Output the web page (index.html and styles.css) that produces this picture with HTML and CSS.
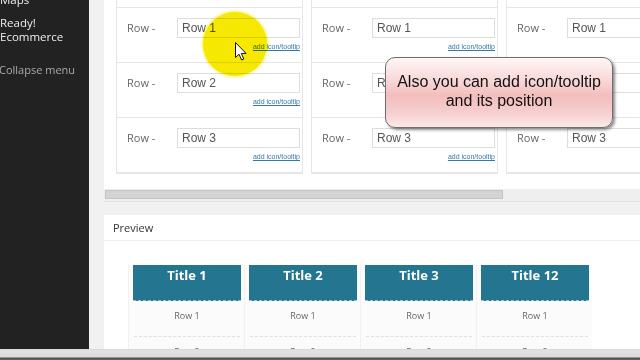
FILE: index.html
```html
<!DOCTYPE html>
<html lang="en">
<head>
  <meta charset="UTF-8" />
  <title>Pricing table editor</title>
  <link rel="stylesheet" href="styles.css">
</head>
<body>
  <div class="screen">
    <div class="main">
      <!-- admin menu -->
      <div class="sidebar">
        <ul class="menu">
          <li>Maps</li>
          <li class="ready">Ready!<br/>Ecommerce</li>
          <li class="collapse">Collapse menu</li>
        </ul>
      </div>

      <div class="content">
        <div class="panel rows-panel">
          <div class="columns">
            <div class="col">
              <div class="stub"></div>
              <div class="row"><span class="label">Row -</span><div class="field"><div class="input">Row 1</div><a class="tip-link">add icon/tooltip</a></div></div>
              <div class="row"><span class="label">Row -</span><div class="field"><div class="input">Row 2</div><a class="tip-link">add icon/tooltip</a></div></div>
              <div class="row"><span class="label">Row -</span><div class="field"><div class="input">Row 3</div><a class="tip-link">add icon/tooltip</a></div></div>
            </div>
            <div class="col">
              <div class="stub"></div>
              <div class="row"><span class="label">Row -</span><div class="field"><div class="input">Row 1</div><a class="tip-link">add icon/tooltip</a></div></div>
              <div class="row"><span class="label">Row -</span><div class="field"><div class="input">Row 2</div><a class="tip-link">add icon/tooltip</a></div></div>
              <div class="row"><span class="label">Row -</span><div class="field"><div class="input">Row 3</div><a class="tip-link">add icon/tooltip</a></div></div>
            </div>
            <div class="col">
              <div class="stub"></div>
              <div class="row"><span class="label">Row -</span><div class="field"><div class="input">Row 1</div><a class="tip-link">add icon/tooltip</a></div></div>
              <div class="row"><span class="label">Row -</span><div class="field"><div class="input">Row 2</div><a class="tip-link">add icon/tooltip</a></div></div>
              <div class="row"><span class="label">Row -</span><div class="field"><div class="input">Row 3</div><a class="tip-link">add icon/tooltip</a></div></div>
            </div>
          </div>
        </div>
        <div class="hscroll"><div class="thumb"></div></div>

        <div class="panel preview-panel">
          <div class="preview-head">Preview</div>
          <div class="tables">
            <div class="ptable"><div class="ptitle">Title 1</div><div class="pcell">Row 1</div><div class="pcell">Row 2</div></div>
            <div class="ptable"><div class="ptitle">Title 2</div><div class="pcell">Row 1</div><div class="pcell">Row 2</div></div>
            <div class="ptable"><div class="ptitle">Title 3</div><div class="pcell">Row 1</div><div class="pcell">Row 2</div></div>
            <div class="ptable"><div class="ptitle">Title 12</div><div class="pcell">Row 1</div><div class="pcell">Row 2</div></div>
          </div>
        </div>
      </div>
    </div>
    <div class="bottom-bar"></div>

    <!-- video overlays -->
    <div class="highlight"></div>
    <svg class="cursor" width="12" height="19" viewBox="0 0 12 19">
      <path d="M0.5 0.5 L0.5 15.5 L4 12.2 L6.6 18 L8.8 17 L6.3 11.4 L11 11.4 Z" fill="#fff" stroke="#111" stroke-width="1"/>
    </svg>
    <div class="callout">Also you can add icon/tooltip<br/>and its position</div>
  </div>
</body>
</html>
```

FILE: styles.css
```css
body {
  margin: 0;
  background: #f1f1f1;
  font-family: "Open Sans", sans-serif;
}

.screen {
  position: relative;
  width: 640px;
  height: 360px;
  overflow: hidden;
}

.main {
  display: flex;
  height: 349px;
}

/* sidebar */
.sidebar {
  width: 89px;
  flex-shrink: 0;
  background: #222;
  overflow: hidden;
}
.menu {
  list-style: none;
  margin: -7px 0 0 0;
  padding: 0;
  font-size: 11.5px;
  line-height: 14px;
  color: #eee;
}
.menu .ready {
  margin-top: 9px;
}
.menu .collapse {
  margin-top: 19px;
  margin-left: -1px;
  color: #aaa;
  font-size: 11px;
}

.content {
  flex: 1;
  min-width: 0;
  padding-left: 15px;
  overflow: hidden;
}

.panel {
  background: #fff;
}

/* rows editor */
.rows-panel {
  height: 189px;
  padding-left: 12px;
  overflow: hidden;
}
.columns {
  display: flex;
  gap: 8px;
  width: 700px;
}
.col {
  width: 185px;
  flex-shrink: 0;
  border: 1px solid #e6e6e6;
  border-top: none;
}
.stub {
  height: 7px;
  border-bottom: 1px solid #e6e6e6;
}
.row {
  display: flex;
  height: 55px;
  border-bottom: 1px solid #e6e6e6;
  padding-top: 10px;
  box-sizing: border-box;
}
.label {
  width: 50px;
  padding-left: 10px;
  font-size: 11px;
  line-height: 20px;
  color: #666;
}
.field {
  display: flex;
  flex-direction: column;
  align-items: flex-end;
  width: 123px;
}
.input {
  width: 123px;
  height: 20px;
  box-sizing: border-box;
  border: 1px solid #ddd;
  padding-left: 4px;
  font-family: "Liberation Sans", Arial, sans-serif;
  font-size: 12px;
  line-height: 19px;
  color: #555;
}
.tip-link {
  margin-top: 5px;
  font-family: "Liberation Sans", Arial, sans-serif;
  font-size: 7px;
  line-height: 8px;
  color: #3579a8;
  text-decoration: underline;
}

/* horizontal scrollbar */
.hscroll {
  height: 13px;
  background: #efefef;
  border-bottom: 1px solid #e2e2e2;
  box-sizing: border-box;
  padding: 1px 0 0 1px;
}
.thumb {
  width: 398px;
  height: 9px;
  background: #d4d4d4;
  border: 1px solid #c4c4c4;
  box-sizing: border-box;
}

/* preview */
.preview-panel {
  margin-top: 13px;
  height: 134px;
  overflow: hidden;
}
.preview-head {
  height: 26px;
  padding-left: 9px;
  border-bottom: 1px solid #eee;
  box-sizing: border-box;
  font-size: 11px;
  line-height: 26px;
  color: #333;
}
.tables {
  display: flex;
  padding: 24px 0 0 24px;
}
.ptable {
  width: 116px;
  box-sizing: border-box;
  padding: 0 4px 0 5px;
  background: #fbfbfb;
  border-left: 1px solid #f1f1f1;
}
.ptitle {
  height: 36px;
  margin: 0 -1px 0 -1px;
  background: #247690;
  border-bottom: 1px dashed #9cc3cf;
  box-sizing: border-box;
  padding-top: 1px;
  text-align: center;
  font-size: 13px;
  font-weight: 700;
  line-height: 18px;
  color: #fff;
}
.pcell {
  height: 35px;
  border-bottom: 1px dashed #e0e0e0;
  text-align: center;
  font-size: 9px;
  line-height: 30px;
  color: #666;
}

.bottom-bar {
  height: 11px;
  background: linear-gradient(to bottom, #cfcfcf 0, #e2e2e2 1px, #dcdcdc 8px, #4a4a4a 9px, #6a6a6a 11px);
}

/* overlays from the recording */
.highlight {
  position: absolute;
  left: 203px;
  top: 12px;
  width: 64px;
  height: 64px;
  border-radius: 50%;
  background: #f6e800;
  box-shadow: 0 0 3px 1px rgba(246, 232, 0, 0.6);
  mix-blend-mode: multiply;
}
.cursor {
  position: absolute;
  left: 235px;
  top: 42px;
}
.callout {
  position: absolute;
  left: 385px;
  top: 57px;
  width: 228px;
  height: 71px;
  box-sizing: border-box;
  padding-top: 14px;
  border: 1px solid #6e6e6e;
  border-radius: 10px;
  background: linear-gradient(to bottom, #fef6f6 0%, #f9dada 30%, #f3bdbd 55%, #f6d0d0 80%, #fce9e9 100%);
  box-shadow: 2px 2px 3px rgba(0, 0, 0, 0.45);
  text-align: center;
  font-family: "Liberation Sans", Arial, sans-serif;
  font-size: 16px;
  line-height: 19px;
  color: #111;
}
```
